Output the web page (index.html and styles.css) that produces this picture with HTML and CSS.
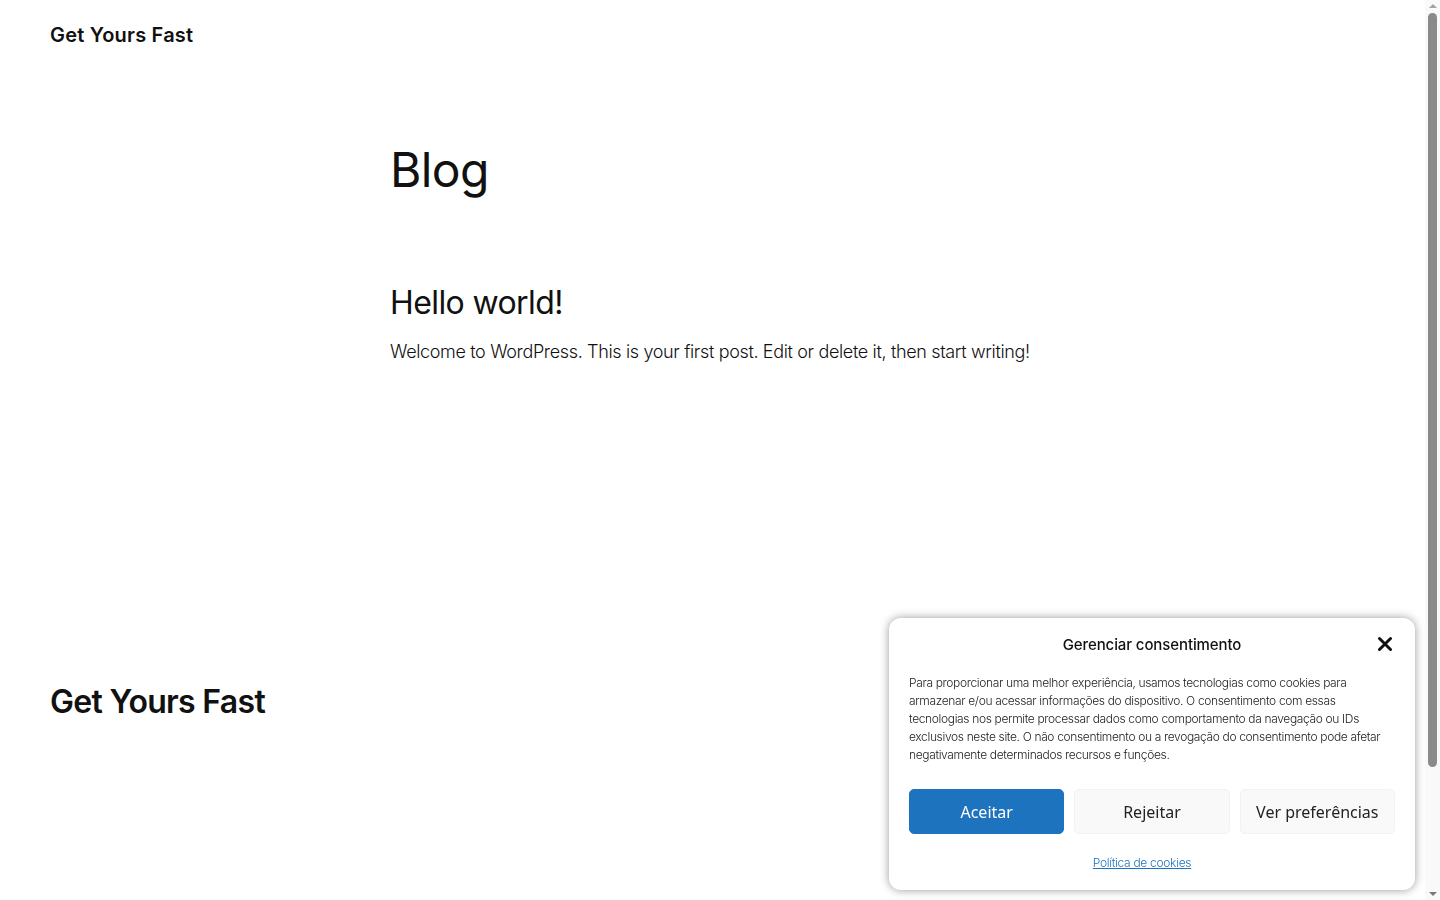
FILE: index.html
```html
<!DOCTYPE html>
<html lang="pt-BR">
<head>
  <meta charset="UTF-8">
  <title>Blog – Get Yours Fast</title>
  <link rel="stylesheet" href="styles.css">
</head>
<body>

  <header class="site-header">
    <a class="site-title" href="#">Get Yours Fast</a>
  </header>

  <main class="site-main">
    <h1 class="page-title">Blog</h1>

    <article class="post">
      <h2 class="post-title">Hello world!</h2>
      <p class="post-excerpt">Welcome to WordPress. This is your first post. Edit or delete it, then start writing!</p>
    </article>
  </main>

  <footer class="site-footer">
    <a class="footer-title" href="#">Get Yours Fast</a>
  </footer>

  <div class="cookie-banner">
    <div class="cookie-header">
      <span class="cookie-title">Gerenciar consentimento</span>
      <button class="cookie-close" aria-label="Fechar">
        <svg width="16" height="16" viewBox="0 0 16 16"><path d="M2.5 2.5 L13.5 13.5 M13.5 2.5 L2.5 13.5" stroke="#111" stroke-width="3" stroke-linecap="round"/></svg>
      </button>
    </div>
    <p class="cookie-text">Para proporcionar uma melhor experiência, usamos tecnologias como cookies para armazenar e/ou acessar informações do dispositivo. O consentimento com essas tecnologias nos permite processar dados como comportamento da navegação ou IDs exclusivos neste site. O não consentimento ou a revogação do consentimento pode afetar negativamente determinados recursos e funções.</p>
    <div class="cookie-buttons">
      <button class="btn btn-accept">Aceitar</button>
      <button class="btn">Rejeitar</button>
      <button class="btn">Ver preferências</button>
    </div>
    <div class="cookie-links">
      <a href="#">Política de cookies</a>
    </div>
  </div>

  <!-- window scrollbar as it appears in the screenshot -->
  <div class="scrollbar" aria-hidden="true">
    <span class="scroll-arrow up"></span>
    <div class="scroll-track"><div class="scroll-thumb"></div></div>
    <span class="scroll-arrow down"></span>
  </div>

</body>
</html>
```

FILE: styles.css
```css
* {
  box-sizing: border-box;
}

body {
  margin: 0;
  padding-right: 15px;
  font-family: Inter, "Noto Sans", sans-serif;
  color: #111;
  background: #fff;
}

a {
  color: inherit;
  text-decoration: none;
}

.site-header {
  padding: 23px 50px 0;
  height: 60px;
}

.site-title {
  font-size: 20px;
  font-weight: 600;
  letter-spacing: 0.2px;
}

.site-main {
  width: 645px;
  margin: 0 auto;
  padding-top: 81px;
  min-height: 550px;
}

.page-title {
  margin: 0;
  font-size: 48px;
  font-weight: 400;
  line-height: 1.2;
  letter-spacing: -0.6px;
}

.post {
  margin-top: 85px;
}

.post-title {
  margin: 0;
  font-size: 32px;
  font-weight: 400;
  line-height: 1.2;
  letter-spacing: -0.6px;
}

.post-excerpt {
  margin: 17px 0 0;
  font-size: 18px;
  font-weight: 300;
  line-height: 1.4;
  letter-spacing: -0.35px;
}

.site-footer {
  padding: 72px 50px 324px;
}

.footer-title {
  font-size: 32px;
  font-weight: 600;
  letter-spacing: -0.7px;
}

.cookie-banner {
  position: fixed;
  right: 25px;
  bottom: 10px;
  width: 526px;
  padding: 14px 20px 19px;
  background: #fff;
  border-radius: 12px;
  box-shadow: 0 0 10px rgba(0, 0, 0, 0.4);
}

.cookie-header {
  display: flex;
  justify-content: center;
  align-items: center;
  position: relative;
  height: 24px;
}

.cookie-title {
  font-size: 15px;
  font-weight: 500;
  letter-spacing: -0.1px;
}

.cookie-close {
  position: absolute;
  right: 2px;
  top: 4px;
  padding: 0;
  border: none;
  background: none;
  cursor: pointer;
}

.cookie-text {
  margin: 18px 0 0;
  font-size: 12px;
  font-weight: 300;
  line-height: 18px;
  letter-spacing: -0.35px;
  color: #222;
}

.cookie-buttons {
  display: flex;
  gap: 10px;
  margin-top: 25px;
}

.btn {
  flex: 1;
  height: 45px;
  font-family: "Noto Sans", sans-serif;
  font-size: 16px;
  color: #222;
  background: #f9f9f9;
  border: 1px solid #f2f2f2;
  border-radius: 5px;
  cursor: pointer;
}

.btn-accept {
  background: #1e73be;
  border-color: #1e73be;
  color: #fff;
}

.cookie-links {
  margin-top: 17px;
  padding-right: 20px;
  text-align: center;
}

.cookie-links a {
  font-size: 12px;
  font-weight: 300;
  letter-spacing: -0.3px;
  color: #1e73be;
  text-decoration: underline;
}

.scrollbar {
  position: fixed;
  top: 0;
  right: 0;
  bottom: 0;
  width: 15px;
  display: flex;
  flex-direction: column;
  align-items: center;
  background: #f9f9f9;
}

.scroll-arrow {
  width: 0;
  height: 0;
  margin: 4px 0 3px;
  border-left: 4px solid transparent;
  border-right: 4px solid transparent;
}

.scroll-arrow.up {
  border-bottom: 4px solid #a3a3a3;
}

.scroll-arrow.down {
  margin: 3px 0 4px;
  border-top: 4px solid #7a7a7a;
}

.scroll-track {
  flex: 1;
  width: 100%;
  padding: 2px 3px;
}

.scroll-thumb {
  height: 754px;
  background: #8a8a8a;
  border-radius: 5px;
}
```
